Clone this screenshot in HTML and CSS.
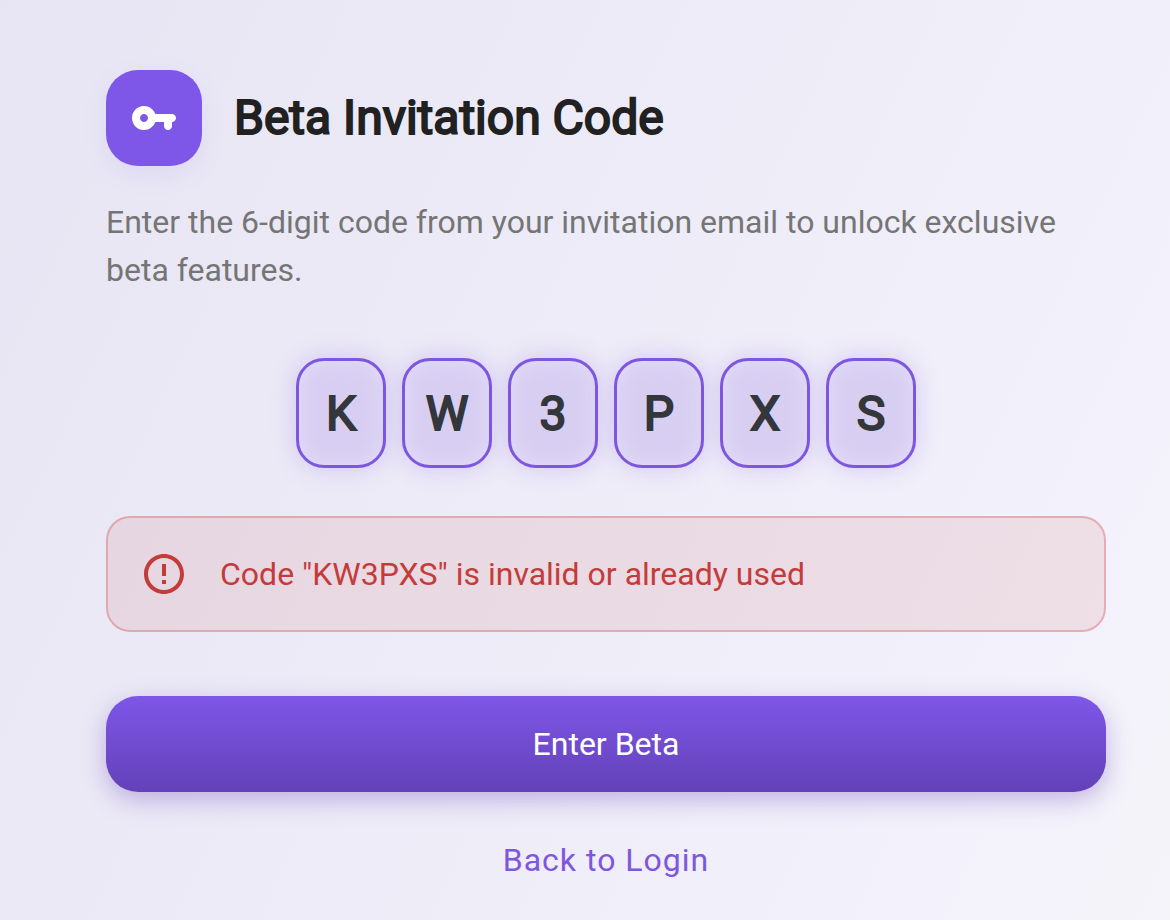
FILE: index.html
```html
<!DOCTYPE html>
<html lang="en">
<head>
    <meta charset="UTF-8">
    <meta name="viewport" content="width=device-width, initial-scale=1.0">
    <title>Beta Invitation Code</title>
    <link rel="stylesheet" href="styles.css">
</head>
<body>

    <main class="invite">
        <header class="invite-header">
            <div class="invite-icon">
                <svg viewBox="0 0 24 24" aria-hidden="true">
                    <path d="M12.65 10C11.7 7.31 8.9 5.5 5.77 6.12c-2.29.46-4.15 2.29-4.63 4.58C.32 14.57 3.26 18 7 18c2.61 0 4.83-1.67 5.65-4H17v2c0 1.1.9 2 2 2s2-.9 2-2v-2c1.1 0 2-.9 2-2s-.9-2-2-2h-8.35zM7 14c-1.1 0-2-.9-2-2s.9-2 2-2 2 .9 2 2-.9 2-2 2z"/>
                </svg>
            </div>
            <h1>Beta Invitation Code</h1>
        </header>

        <p class="invite-text">Enter the 6-digit code from your invitation email to unlock exclusive beta features.</p>

        <form class="invite-form">
            <div class="code-inputs" role="group" aria-label="Invitation code">
                <input type="text" maxlength="1" value="K" aria-label="Character 1">
                <input type="text" maxlength="1" value="W" aria-label="Character 2">
                <input type="text" maxlength="1" value="3" aria-label="Character 3">
                <input type="text" maxlength="1" value="P" aria-label="Character 4">
                <input type="text" maxlength="1" value="X" aria-label="Character 5">
                <input type="text" maxlength="1" value="S" aria-label="Character 6">
            </div>

            <div class="error-box" role="alert">
                <svg viewBox="0 0 24 24" aria-hidden="true">
                    <path d="M11 15h2v2h-2zm0-8h2v6h-2zm.99-5C6.47 2 2 6.48 2 12s4.47 10 9.99 10C17.52 22 22 17.52 22 12S17.52 2 11.99 2zM12 20c-4.42 0-8-3.58-8-8s3.58-8 8-8 8 3.58 8 8-3.58 8-8 8z"/>
                </svg>
                <p>Code "KW3PXS" is invalid or already used</p>
            </div>

            <button class="submit-button" type="submit">Enter Beta</button>
        </form>

        <a class="back-link" href="#">Back to Login</a>
    </main>

</body>
</html>
```
FILE: styles.css
```css
* {
    box-sizing: border-box;
}

body {
    font-family: Roboto, sans-serif;
    font-size: 32px;
    line-height: 48px;
    margin: 0;
    min-height: 100vh;
    background: linear-gradient(115deg, #e7e5f3 0%, #f3f1fb 85%, #f4f4f9 100%);
}

.invite {
    display: flex;
    flex-direction: column;
    padding: 70px 64px 36px 106px;
}

.invite-header {
    display: flex;
    align-items: center;
    gap: 32px;
}

.invite-icon {
    display: flex;
    align-items: center;
    justify-content: center;
    width: 96px;
    height: 96px;
    background: #7e57e8;
    border-radius: 32px;
    box-shadow: 0 8px 24px rgba(126, 87, 232, 0.1);
}

.invite-icon svg {
    width: 48px;
    height: 48px;
    fill: white;
}

h1 {
    margin: 0;
    font-size: 48px;
    font-weight: 400;
    line-height: 60px;
    color: #212121;
    -webkit-text-stroke: 2px #212121;
}

.invite-text {
    margin: 32px 0 64px;
    color: #757575;
}

.code-inputs {
    display: flex;
    justify-content: center;
    gap: 16px;
}

.code-inputs input {
    width: 90px;
    height: 110px;
    padding: 0;
    font-family: inherit;
    font-size: 48px;
    font-weight: 400;
    text-align: center;
    color: #33363b;
    background: #d8cef2;
    border: 3px solid #7e57e0;
    border-radius: 28px;
    box-shadow: 0 0 24px rgba(126, 87, 232, 0.25), inset 0 0 20px rgba(230, 226, 250, 0.8);
    -webkit-text-stroke: 2px #33363b;
}

.error-box {
    display: flex;
    align-items: center;
    gap: 32px;
    margin: 48px 0 64px;
    padding: 32px;
    color: #c43c3a;
    background: rgba(198, 60, 50, 0.1);
    border: 2px solid rgba(211, 60, 60, 0.3);
    border-radius: 24px;
}

.error-box svg {
    flex: none;
    width: 48px;
    height: 48px;
    fill: currentColor;
}

.error-box p {
    margin: 0;
}

.submit-button {
    display: block;
    width: 100%;
    height: 96px;
    font-family: inherit;
    font-size: 32px;
    color: white;
    background: linear-gradient(#7e57e8, #6341b8);
    border: none;
    border-radius: 32px;
    box-shadow: 0 8px 24px rgba(99, 65, 184, 0.35);
    cursor: pointer;
}

.back-link {
    align-self: center;
    margin-top: 44px;
    color: #7e57e0;
    letter-spacing: 1px;
    text-decoration: none;
}
```
